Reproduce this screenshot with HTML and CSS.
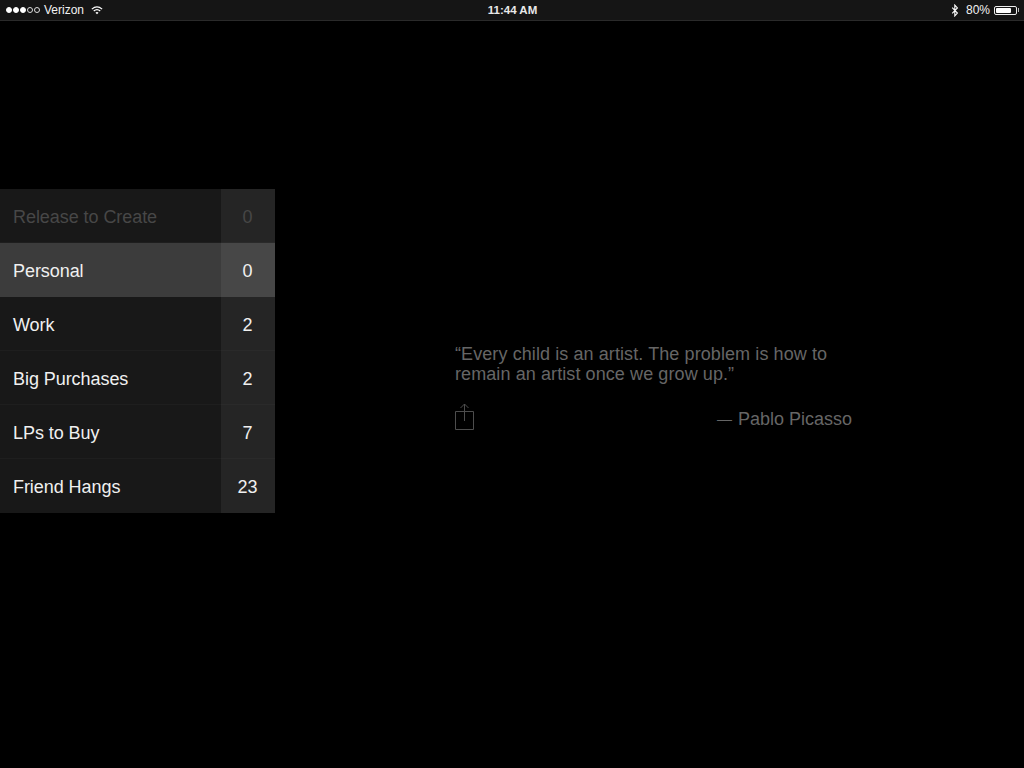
FILE: index.html
```html
<!DOCTYPE html>
<html lang="en">
<head>
<meta charset="utf-8">
<title>Lists</title>
<link rel="stylesheet" href="styles.css">
</head>
<body>
<header class="status">
  <div class="status-left">
    <span class="signal"><i class="dot on"></i><i class="dot on"></i><i class="dot on"></i><i class="dot"></i><i class="dot"></i></span>
    <span class="carrier">Verizon</span>
    <svg class="wifi" width="12" height="9" viewBox="0 0 14 10"><path d="M1 3.400C4.600.3 9.400.3 13 3.400" fill="none" stroke="#fff" stroke-width="1.500"/><path d="M3.200 5.600c2.300-1.900 5.300-1.900 7.600 0" fill="none" stroke="#fff" stroke-width="1.500"/><path d="M5.200 7.500c1.100-.9 2.500-.9 3.600 0L7 9.500z" fill="#fff"/></svg>
  </div>
  <div class="status-time">11:44 AM</div>
  <div class="status-right">
    <svg class="bt" width="8" height="13" viewBox="0 0 8 14"><path d="M1 3.800 6.600 9.700 3.800 12.800V1.200L6.600 4.300 1 10.200" fill="none" stroke="#fff" stroke-width="1.200"/></svg>
    <span class="pct">80%</span>
    <span class="battery"><span class="battery-fill"></span></span><span class="battery-tip"></span>
  </div>
</header>
<main class="main">
  <ul class="lists">
    <li class="row row-create"><span class="name">Release to Create</span><span class="count">0</span></li>
    <li class="row row-active"><span class="name">Personal</span><span class="count">0</span></li>
    <li class="row"><span class="name">Work</span><span class="count">2</span></li>
    <li class="row"><span class="name">Big Purchases</span><span class="count">2</span></li>
    <li class="row"><span class="name">LPs to Buy</span><span class="count">7</span></li>
    <li class="row"><span class="name">Friend Hangs</span><span class="count">23</span></li>
  </ul>
  <section class="quote">
    <p class="quote-text">“Every child is an artist. The problem is how to remain an artist once we grow up.”</p>
    <div class="quote-foot">
      <svg class="share" width="19" height="28" viewBox="0 0 19 28"><path d="M.5 7.500h18v18H.5zM9.500 0v17M5.500 4 9.500 0l4 4" fill="none" stroke="#4d4d4d"/></svg>
      <span class="author"><span class="dash">—</span> Pablo Picasso</span>
    </div>
  </section>
</main>
</body>
</html>
```
FILE: styles.css
```css
* { box-sizing: border-box; }
html, body { margin: 0; height: 100%; }
body {
  background: #000;
  font-family: "Liberation Sans", Arial, sans-serif;
  color: #fff;
  display: flex;
  flex-direction: column;
  height: 768px;
  overflow: hidden;
}
.status {
  height: 21px;
  background: #151515;
  border-bottom: 1px solid #2a2a2a;
  display: grid;
  grid-template-columns: 1fr auto 1fr;
  align-items: center;
  font-size: 12px;
  color: #f2f2f2;
  padding: 0 5px 0 6px;
  flex: none;
}
.status-left { display: flex; align-items: center; }
.signal { display: flex; gap: 1px; margin-right: 4px; }
.dot { width: 6px; height: 6px; border-radius: 50%; border: 1px solid #ddd; display: block; }
.dot.on { background: #fff; border-color: #fff; }
.wifi { margin: 1px 0 0 7px; }
.status-time { font-weight: 700; font-size: 11.5px; color: #e8e8e8; }
.status-right { display: flex; align-items: center; justify-content: flex-end; }
.bt { margin-right: 7px; }
.pct { margin-right: 4px; }
.battery { width: 23px; height: 9px; border: 1px solid #eee; border-radius: 2px; padding: 1px; display: block; }
.battery-fill { display: block; width: 80%; height: 100%; background: #fff; border-radius: 1px; }
.battery-tip { width: 1.500px; height: 4px; background: #bbb; margin-left: .5px; }
.main { flex: 1; display: flex; align-items: flex-start; padding-top: 168px; }
.lists { list-style: none; margin: 0; padding: 0; width: 275px; flex: none; }
.row {
  display: grid;
  grid-template-columns: 221px 54px;
  grid-template-rows: 54px;
  height: 54px;
  font-size: 18px;
  line-height: 56px;
  letter-spacing: -.06px;
  background: #181818;
  box-shadow: inset 0 -1px 0 #1e1e1e;
}
.name { padding-left: 13px; white-space: nowrap; color: #f0f0f0; }
.count { background: #252525; text-align: center; color: #f0f0f0; padding-right: 1px; box-shadow: inset 0 -1px 0 #2a2a2a; }
.row-create .name { color: #474747; }
.row-create .count { color: #474747; }
.row-active { background: #3c3c3c; box-shadow: none; }
.row-active .count { background: #474747; box-shadow: none; }
.row:last-child, .row:last-child .count { box-shadow: none; }
.quote { margin: 155px 0 0 180px; width: 397px; color: #666; font-size: 18px; }
.quote-text { margin: 0; line-height: 20px; letter-spacing: .09px; }
.quote-foot { display: flex; justify-content: space-between; align-items: flex-start; margin-top: 20px; }
.share { display: block; }
.author { margin-top: 5px; line-height: 20px; }
.dash { font-size: 15px; vertical-align: 1px; margin-right: 1px; }
```
